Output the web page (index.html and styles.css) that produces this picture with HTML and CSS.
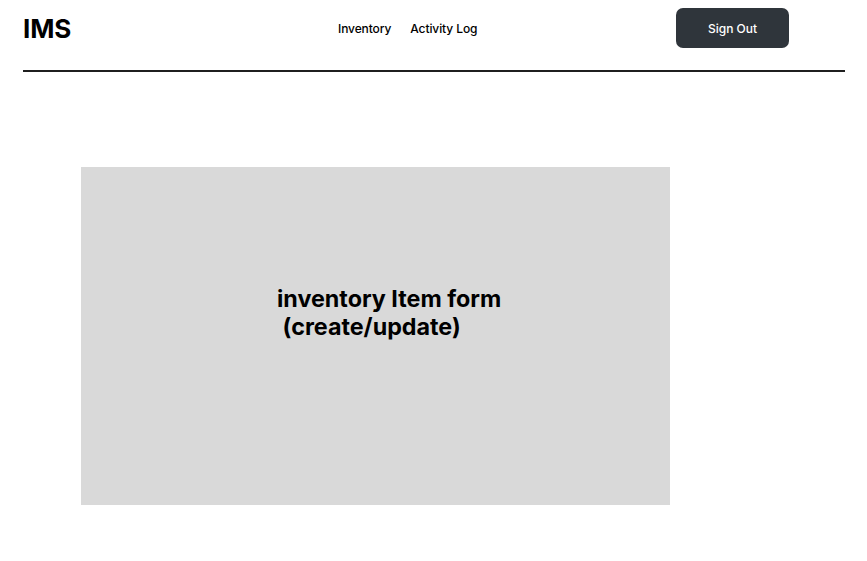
FILE: index.html
```html
<!DOCTYPE html>
<html>
<head>
<meta charset="utf-8">
<link rel="stylesheet" href="styles.css">
</head>
<body>
<header class="topbar">
  <div class="logo">IMS</div>
  <nav class="nav">
    <a class="nav-link" href="#">Inventory</a>
    <a class="nav-link" href="#">Activity Log</a>
  </nav>
  <button class="signout">Sign Out</button>
</header>
<div class="rule"></div>
<main class="main">
  <section class="placeholder">
    <div class="placeholder-text">inventory Item form<br>&nbsp;(create/update)</div>
  </section>
</main>
</body>
</html>
```
FILE: styles.css
```css
* { box-sizing: border-box; }
body {
  margin: 0;
  font-family: Inter, "Noto Sans", sans-serif;
  color: #000;
  background: #fff;
}
.topbar {
  display: flex;
  align-items: center;
  height: 56px;
  padding: 8px 0 0 23px;
}
.logo {
  font-size: 26px;
  font-weight: 700;
  width: 315px;
  letter-spacing: -0.1px;
  margin-top: -8px;
}
.nav {
  display: flex;
  gap: 19px;
  width: 338px;
  margin-top: -8px;
}
.nav-link {
  font-size: 12px;
  font-weight: 500;
  letter-spacing: -0.1px;
  color: #000;
  text-decoration: none;
}
.signout {
  width: 113px;
  height: 40px;
  margin-top: -8px;
  border: none;
  border-radius: 7px;
  background: #2f353b;
  color: #fff;
  font-family: inherit;
  font-size: 12px;
  font-weight: 500;
}
.rule {
  margin: 14px 22px 0 23px;
  height: 2px;
  background: #1f1f1f;
}
.main {
  padding: 95px 0 0 81px;
}
.placeholder {
  width: 589px;
  height: 338px;
  background: #d9d9d9;
  padding: 118px 0 0 196px;
}
.placeholder-text {
  font-size: 23.3px;
  font-weight: 700;
  line-height: 28px;
}
```
